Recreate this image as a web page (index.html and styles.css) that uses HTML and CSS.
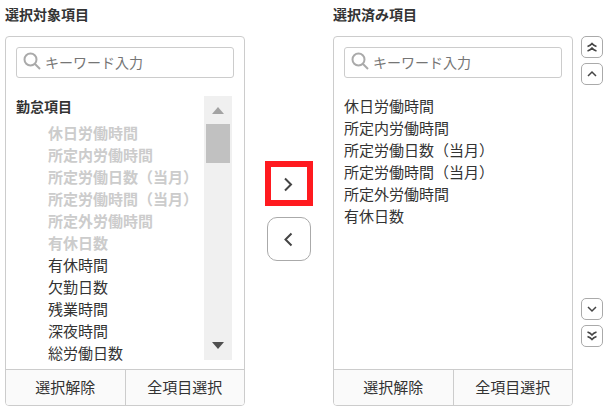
FILE: index.html
```html
<!DOCTYPE html>
<html lang="ja">
<head>
    <meta charset="UTF-8">
    <meta name="viewport" content="width=device-width, initial-scale=1.0">
    <title>項目選択</title>
    <link rel="stylesheet" href="styles.css">
</head>
<body>
    <div class="picker">
        <!-- 選択対象 -->
        <section class="column">
            <h2>選択対象項目</h2>
            <div class="panel">
                <label class="search">
                    <svg class="search-icon" viewBox="0 0 18 18" aria-hidden="true"><circle cx="7.5" cy="7.5" r="6"/><path d="M12 12l5 5"/></svg>
                    <input type="text" placeholder="キーワード入力" aria-label="キーワード入力">
                </label>
                <div class="list-area">
                    <div class="list">
                        <h3>勤怠項目</h3>
                        <ul class="items nested">
                            <li class="disabled">休日労働時間</li>
                            <li class="disabled">所定内労働時間</li>
                            <li class="disabled">所定労働日数（当月）</li>
                            <li class="disabled">所定労働時間（当月）</li>
                            <li class="disabled">所定外労働時間</li>
                            <li class="disabled">有休日数</li>
                            <li>有休時間</li>
                            <li>欠勤日数</li>
                            <li>残業時間</li>
                            <li>深夜時間</li>
                            <li>総労働日数</li>
                        </ul>
                    </div>
                    <div class="scrollbar">
                        <span class="arrow-up"></span>
                        <span class="thumb"></span>
                        <span class="arrow-down"></span>
                    </div>
                </div>
                <div class="panel-footer">
                    <button type="button">選択解除</button>
                    <button type="button">全項目選択</button>
                </div>
            </div>
        </section>

        <!-- 移動ボタン -->
        <div class="move">
            <button type="button" class="move-btn highlight" aria-label="追加">
                <svg viewBox="0 0 16 16"><path d="M4 2.500l6 6-6 6"/></svg>
            </button>
            <button type="button" class="move-btn" aria-label="削除">
                <svg viewBox="0 0 16 16"><path d="M10.500 2.500l-6 6 6 6"/></svg>
            </button>
        </div>

        <!-- 選択済み -->
        <section class="column">
            <h2>選択済み項目</h2>
            <div class="panel">
                <label class="search">
                    <svg class="search-icon" viewBox="0 0 18 18" aria-hidden="true"><circle cx="7.5" cy="7.5" r="6"/><path d="M12 12l5 5"/></svg>
                    <input type="text" placeholder="キーワード入力" aria-label="キーワード入力">
                </label>
                <div class="list-area">
                    <ul class="items">
                        <li>休日労働時間</li>
                        <li>所定内労働時間</li>
                        <li>所定労働日数（当月）</li>
                        <li>所定労働時間（当月）</li>
                        <li>所定外労働時間</li>
                        <li>有休日数</li>
                    </ul>
                </div>
                <div class="panel-footer">
                    <button type="button">選択解除</button>
                    <button type="button">全項目選択</button>
                </div>
            </div>
        </section>

        <!-- 並び替え -->
        <div class="order">
            <div class="order-group">
                <button type="button" class="order-btn" aria-label="一番上へ">
                    <svg viewBox="0 0 12 12"><path d="M1.500 5.500q3-1 4.500-3 1.500 2 4.500 3M1.500 10q3-1 4.500-3 1.500 2 4.500 3"/></svg>
                </button>
                <button type="button" class="order-btn" aria-label="上へ">
                    <svg viewBox="0 0 12 12"><path d="M2 8l4-4 4 4"/></svg>
                </button>
            </div>
            <div class="order-group">
                <button type="button" class="order-btn" aria-label="下へ">
                    <svg viewBox="0 0 12 12"><path d="M2 4l4 4 4-4"/></svg>
                </button>
                <button type="button" class="order-btn" aria-label="一番下へ">
                    <svg viewBox="0 0 12 12"><path d="M1.500 2q3 1 4.500 3 1.500-2 4.500-3M1.500 6.500q3 1 4.500 3 1.500-2 4.500-3"/></svg>
                </button>
            </div>
        </div>
    </div>
</body>
</html>
```

FILE: styles.css
```css
* {
    box-sizing: border-box;
}
body {
    margin: 0;
    background-color: #fff;
    color: #333;
    font-family: "Noto Sans CJK JP", sans-serif;
    font-size: 15px;
    line-height: 22px;
}
h2, h3, ul {
    margin: 0;
    padding: 0;
}
h2, h3 {
    font-size: 14px;
}
button, input {
    font-family: inherit;
    font-size: 15px;
    color: #333;
}
button {
    padding: 0;
    cursor: pointer;
}
svg {
    display: block;
    fill: none;
    stroke: #444;
    stroke-width: 2;
}
.picker {
    display: flex;
    padding: 3px 6px 3px 5px;
}
.column {
    flex: 1;
    min-width: 0;
}
.column h2 {
    margin-bottom: 11px;
}
.panel {
    border: 1px solid #ccc;
    border-radius: 4px;
    overflow: hidden;
}
.search {
    display: flex;
    align-items: center;
    gap: 4px;
    height: 31px;
    margin: 10px 10px 17px;
    padding: 0 6px;
    border: 1px solid #ccc;
    border-radius: 3px;
}
.search-icon {
    flex: none;
    width: 18px;
    height: 18px;
    margin-bottom: 4px;
    stroke: #aaa;
}
.search input {
    flex: 1;
    min-width: 0;
    padding: 0 0 2px;
    border: none;
    outline: none;
    background: none;
    font-size: 14px;
}
.search input::placeholder {
    color: #757575;
}
.list-area {
    display: flex;
    justify-content: space-between;
    height: 270px;
    margin: 0 12px 4px 10px;
}
.list {
    overflow: hidden;
}
.list h3 {
    margin-bottom: 5px;
}
.items {
    list-style: none;
}
.nested {
    padding-left: 32px;
}
.disabled {
    color: #ccc;
    font-weight: bold;
}
.scrollbar {
    display: flex;
    flex-direction: column;
    align-items: center;
    flex: none;
    width: 28px;
    margin: 1px 0 5px;
    padding: 11px 0;
    background-color: #f0f0f0;
}
.arrow-up, .arrow-down {
    border: 6px solid transparent;
}
.arrow-up {
    border-top: none;
    border-bottom: 7px solid #a3a3a3;
}
.arrow-down {
    margin-top: auto;
    border-bottom: none;
    border-top: 7px solid #505050;
}
.thumb {
    width: 24px;
    height: 39px;
    margin-top: 10px;
    background-color: #c1c1c1;
}
.panel-footer {
    display: flex;
    border-top: 1px solid #ccc;
}
.panel-footer button {
    flex: 1;
    height: 35px;
    padding-bottom: 2px;
    border: none;
    background-color: #fafafa;
}
.panel-footer button + button {
    border-left: 1px solid #ccc;
}
.move {
    display: flex;
    flex-direction: column;
    align-items: center;
    gap: 11px;
    width: 88px;
    padding-top: 158px;
}
.move-btn {
    display: flex;
    align-items: center;
    justify-content: center;
    width: 44px;
    height: 44px;
    border: 1px solid #aaa;
    border-radius: 10px;
    background-color: #fff;
}
.move-btn svg {
    width: 16px;
    height: 16px;
}
.highlight {
    width: 48px;
    height: 45px;
    border: 6px solid #ff1a1f;
    border-radius: 0;
}
.order {
    display: flex;
    flex-direction: column;
    justify-content: space-between;
    margin-left: 8px;
    padding: 33px 0 59px;
}
.order-group {
    display: flex;
    flex-direction: column;
    gap: 5px;
}
.order-btn {
    display: flex;
    align-items: center;
    justify-content: center;
    width: 22px;
    height: 22px;
    border: 1px solid #aaa;
    border-radius: 5px;
    background-color: #fff;
}
.order-btn svg {
    width: 12px;
    height: 12px;
    stroke-width: 1.5;
}
```
